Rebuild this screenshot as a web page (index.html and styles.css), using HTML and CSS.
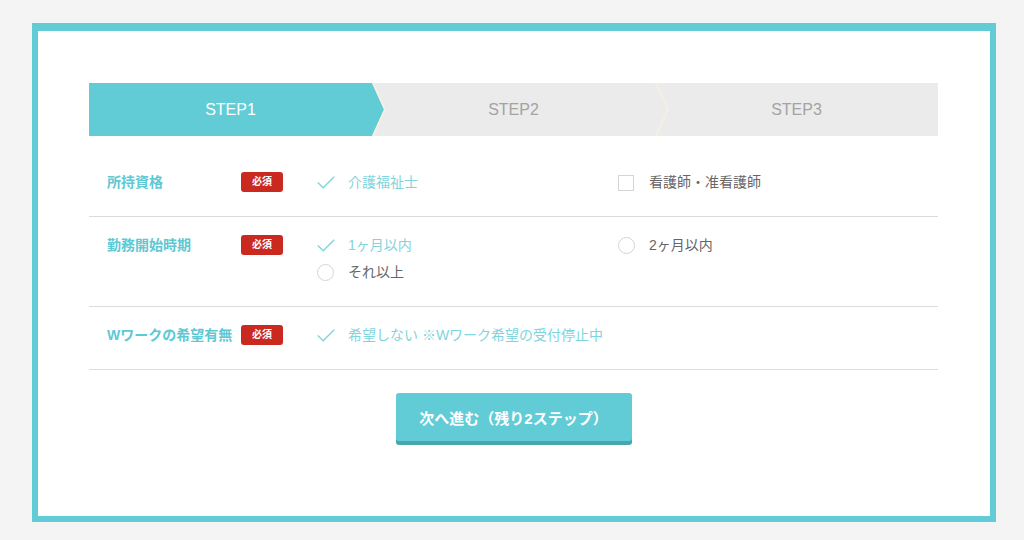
FILE: index.html
```html
<!DOCTYPE html>
<html lang="ja">
<head>
<meta charset="utf-8">
<title>エントリーフォーム STEP1</title>
<link rel="stylesheet" href="styles.css">
</head>

<body>

<section class="form-box">

  <ol class="steps">
    <li class="step active">STEP1</li>
    <li class="step">STEP2</li>
    <li class="step">STEP3</li>
  </ol>

  <div class="form-row">
    <div class="row-label">所持資格</div>
    <span class="badge">必須</span>
    <div class="options">
      <div class="option checked">
        <span class="marker"><svg width="18" height="13" viewBox="0 0 18 13"><polyline points="0.8,6.6 6.2,11.8 17.2,0.8" fill="none" stroke="#7fd5dd" stroke-width="1.4"/></svg></span>
        介護福祉士
      </div>
      <div class="option">
        <span class="marker"><span class="box"></span></span>
        看護師・准看護師
      </div>
    </div>
  </div>

  <div class="form-row">
    <div class="row-label">勤務開始時期</div>
    <span class="badge">必須</span>
    <div class="options">
      <div class="option checked">
        <span class="marker"><svg width="18" height="13" viewBox="0 0 18 13"><polyline points="0.8,6.6 6.2,11.8 17.2,0.8" fill="none" stroke="#7fd5dd" stroke-width="1.4"/></svg></span>
        1ヶ月以内
      </div>
      <div class="option">
        <span class="marker"><span class="radio"></span></span>
        2ヶ月以内
      </div>
      <div class="option">
        <span class="marker"><span class="radio"></span></span>
        それ以上
      </div>
    </div>
  </div>

  <div class="form-row">
    <div class="row-label">Wワークの希望有無</div>
    <span class="badge">必須</span>
    <div class="options">
      <div class="option checked wide">
        <span class="marker"><svg width="18" height="13" viewBox="0 0 18 13"><polyline points="0.8,6.6 6.2,11.8 17.2,0.8" fill="none" stroke="#7fd5dd" stroke-width="1.4"/></svg></span>
        希望しない ※Wワーク希望の受付停止中
      </div>
    </div>
  </div>

  <div class="button-bar">
    <button type="button" class="next-button">次へ進む（残り2ステップ）</button>
  </div>

</section>

</body>
</html>
```

FILE: styles.css
```css
body {
  background-color: #f4f4f4;
  color: #666;
  font-family: 'Liberation Sans', 'Noto Sans CJK JP', sans-serif;
  margin: 0;
  padding: 0;
}

ol,
li {
  list-style-type: none;
  margin: 0;
  padding: 0;
}

.form-box {
  background-color: #fff;
  border: 6px solid #62ccd6;
  border-top-width: 8px;
  box-sizing: border-box;
  margin: 23px 0 0 32px;
  padding: 52px 52px 71px 51px;
  width: 964px;
}


/* Step indicator */
.steps {
  display: flex;
  height: 53px;
}
.step {
  background-color: #ebebeb;
  color: #a3a3a3;
  flex: 1;
  font-size: 16px;
  line-height: 53px;
  position: relative;
  text-align: center;
}
.step.active {
  background-color: #62ccd6;
  color: #fff;
}
.step::before,
.step::after {
  content: '';
  height: 100%;
  left: 100%;
  position: absolute;
  top: 0;
  z-index: 1;
}
.step::before {
  background-color: #ebebeb;
  clip-path: polygon(0 0, 12px 50%, 0 100%);
  width: 13px;
}
.step.active::before {
  background-color: #62ccd6;
}
.step::after {
  background-color: #f6efe2;
  clip-path: polygon(0 0, 2px 0, 14px 50%, 2px 100%, 0 100%, 12px 50%);
  width: 15px;
}
.step:last-child::before,
.step:last-child::after {
  display: none;
}


/* Form rows */
.form-row {
  border-bottom: 1px solid #dcdcdc;
  display: flex;
  align-items: flex-start;
  line-height: 27px;
  padding: 15px 0 20px 18px;
}
.steps + .form-row {
  margin-top: 18px;
}

.row-label {
  color: #5ec8d3;
  font-size: 14px;
  font-weight: bold;
  width: 134px;
}

.badge {
  background-color: #c9291f;
  border-radius: 3px;
  color: #fff;
  font-size: 10px;
  font-weight: bold;
  height: 20px;
  line-height: 20px;
  margin-top: 3px;
  text-align: center;
  width: 42px;
}

.options {
  display: grid;
  grid-template-columns: 301px 1fr;
  margin-left: 34px;
  flex: 1;
}

.option {
  align-items: center;
  display: flex;
  font-size: 14px;
  color: #666;
}
.option.checked {
  color: #7fd5dd;
}
.option.wide {
  grid-column: span 2;
}

.marker {
  align-items: center;
  display: inline-flex;
  height: 27px;
  margin-right: 13px;
  width: 18px;
}
.box {
  border: 1px solid #d5d5d5;
  box-sizing: border-box;
  height: 16px;
  width: 16px;
}
.radio {
  border: 1px solid #d5d5d5;
  border-radius: 50%;
  box-sizing: border-box;
  height: 17px;
  width: 17px;
}


/* Next button */
.button-bar {
  padding-top: 23px;
  text-align: center;
}
.next-button {
  background-color: #62ccd6;
  border: 0;
  border-radius: 3px;
  box-shadow: 0 4px 0 #4aa6ae;
  color: #fff;
  cursor: pointer;
  font-family: 'Liberation Sans', 'Noto Sans CJK JP', sans-serif;
  font-size: 15px;
  font-weight: bold;
  height: 48px;
  margin-bottom: 4px;
  padding: 0 18px;
  width: 236px;
}
```
